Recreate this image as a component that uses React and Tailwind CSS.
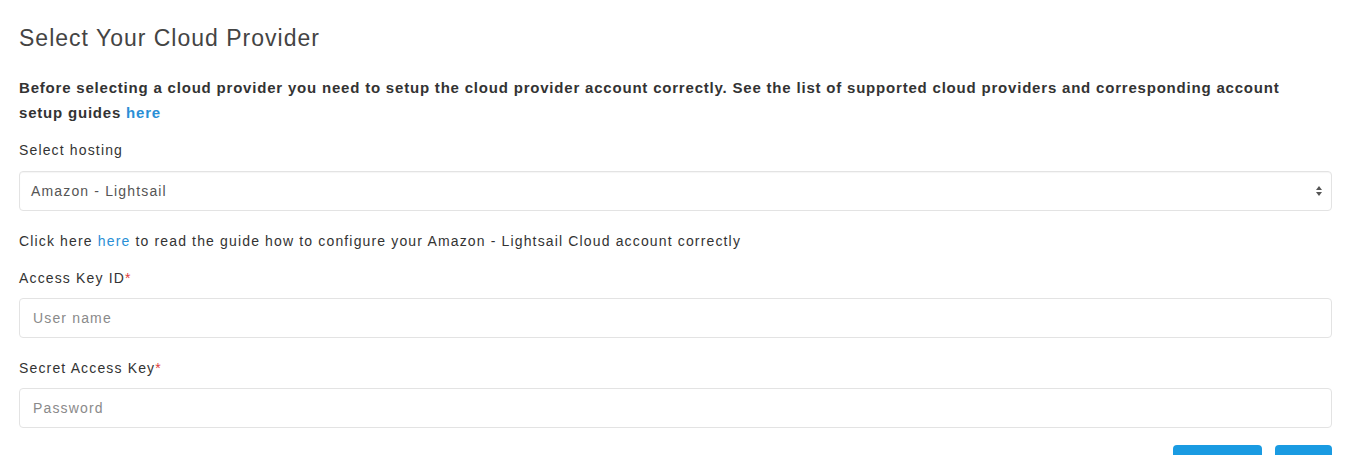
export default function App() {
  return (
    <div className="h-[455px] bg-white pl-[19px] pr-[18px] pt-[22px] text-[#333] overflow-hidden" style={{ fontFamily: '"Liberation Sans", Arial, sans-serif' }}>
      <h1 className="text-[23px] leading-[32px] tracking-[1px] text-[#444]">Select Your Cloud Provider</h1>

      <p className="mt-[21px] mr-[40px] text-[15px] leading-[25px] font-bold tracking-[0.8px] text-[#333]">
        Before selecting a cloud provider you need to setup the cloud provider account correctly. See the list of supported cloud providers and corresponding account setup guides{" "}
        <a className="text-[#2a8fd6]">here</a>
      </p>

      <label className="mt-[15px] block text-[14px] leading-[20px] tracking-[1.15px]">Select hosting</label>
      <div className="mt-[11px] flex h-[40px] items-center justify-between rounded-[4px] border border-[#e3e3e3] px-[11px] text-[14px] tracking-[1.15px] text-[#555] shadow-[inset_0_1px_1px_rgba(0,0,0,0.04)]">
        <span>Amazon - Lightsail</span>
        <svg width="8" height="14" viewBox="0 0 8 14" className="mr-[-3px]">
          <path d="M4 2 L7 6 H1 Z" fill="#555" />
          <path d="M4 12 L7 8 H1 Z" fill="#555" />
        </svg>
      </div>

      <p className="mt-[20px] text-[14px] leading-[20px] tracking-[1.15px]">
        Click here <a className="text-[#2a8fd6]">here</a> to read the guide how to configure your Amazon - Lightsail Cloud account correctly
      </p>

      <label className="mt-[17px] block text-[14px] leading-[20px] tracking-[1.15px]">
        Access Key ID<span className="text-[#e04040]">*</span>
      </label>
      <input
        placeholder="User name"
        className="mt-[10px] block h-[40px] w-full rounded-[4px] border border-[#e3e3e3] px-[13px] text-[14px] tracking-[1.15px] placeholder:text-[#8a8a8a] outline-none"
      />

      <label className="mt-[20px] block text-[14px] leading-[20px] tracking-[1.15px]">
        Secret Access Key<span className="text-[#e04040]">*</span>
      </label>
      <input
        placeholder="Password"
        className="mt-[10px] block h-[40px] w-full rounded-[4px] border border-[#e3e3e3] px-[13px] text-[14px] tracking-[1.15px] placeholder:text-[#8a8a8a] outline-none"
      />

      <div className="mt-[17px] flex justify-end gap-[13px]">
        <button className="h-[36px] w-[89px] rounded-[4px] bg-[#1a9be2]" />
        <button className="h-[36px] w-[57px] rounded-[4px] bg-[#1a9be2]" />
      </div>
    </div>
  );
}
